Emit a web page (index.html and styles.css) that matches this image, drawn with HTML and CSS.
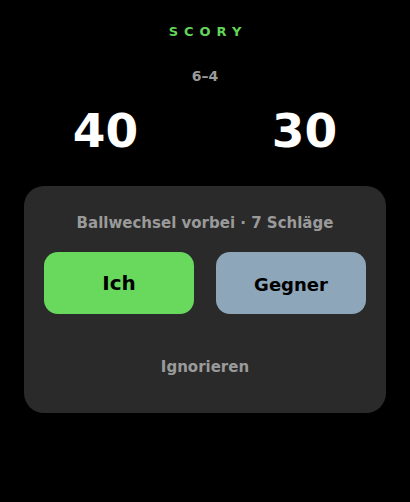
FILE: index.html
```html
<html>

<head>
	<link rel="stylesheet" href="styles.css">
</head>

<body>
	<header class="top">
		<div class="brand">SCORY</div>
		<div class="games">6–4</div>
	</header>

	<div class="scores">
		<div class="score">40</div>
		<div class="score">30</div>
	</div>

	<section class="card">
		<div class="card-title">Ballwechsel vorbei · 7 Schläge</div>
		<div class="choices">
			<button type="button" class="choice me">Ich</button>
			<button type="button" class="choice opponent">Gegner</button>
		</div>
		<button type="button" class="ignore">Ignorieren</button>
	</section>
</body>

</html>
```

FILE: styles.css
```css
body {
	margin: 0;
	background-color: #000;
	font-family: "DejaVu Sans", sans-serif;
	font-weight: bold;
	overflow: hidden;
}

.top {
	display: flex;
	flex-direction: column;
	align-items: center;
	padding-top: 24px;
}

.brand {
	color: #62d65a;
	font-size: 13px;
	letter-spacing: 6px;
	padding-left: 6px;
	line-height: 16px;
}

.games {
	color: #9a9a9a;
	font-size: 14px;
	line-height: 18px;
	margin-top: 27px;
}

.scores {
	display: grid;
	grid-template-columns: 1fr 1fr;
	padding: 0 6px;
	margin-top: 16px;
}

.score {
	color: #fff;
	font-size: 47px;
	line-height: 60px;
	text-align: center;
}

.card {
	margin: 25px 24px 0;
	background-color: #2a2a2a;
	border-radius: 20px;
	padding: 27px 20px 35px;
	display: flex;
	flex-direction: column;
	align-items: center;
}

.card-title {
	color: #9a9a9a;
	font-size: 15px;
	line-height: 20px;
}

.choices {
	display: grid;
	grid-template-columns: 1fr 1fr;
	gap: 22px;
	width: 100%;
	margin-top: 19px;
}

.choice {
	height: 62px;
	border: none;
	border-radius: 14px;
	font-family: "DejaVu Sans", sans-serif;
	font-weight: bold;
	color: #000;
	cursor: pointer;
}

.me {
	background-color: #68d95c;
	font-size: 20px;
}

.opponent {
	background-color: #8ea6b9;
	font-size: 18px;
	padding-top: 3px;
}

.ignore {
	margin-top: 42px;
	background: none;
	border: none;
	color: #9a9a9a;
	font-family: "DejaVu Sans", sans-serif;
	font-weight: bold;
	font-size: 15px;
	line-height: 20px;
	cursor: pointer;
}
```
